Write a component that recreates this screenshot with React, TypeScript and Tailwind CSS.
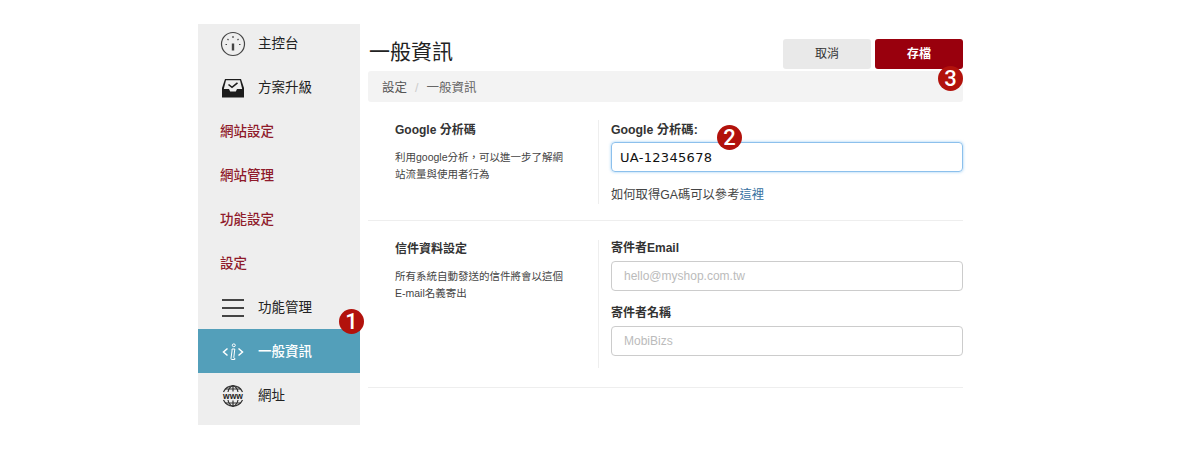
const font = { fontFamily: '"Liberation Sans", "Noto Sans CJK TC", sans-serif' }

function Badge({ n, className }: { n: number; className: string }) {
  return (
    <span
      style={{ fontFamily: 'Roboto, sans-serif' }}
      className={`absolute z-10 flex h-[25px] w-[25px] items-center justify-center rounded-full bg-[#b2120c] text-[22px] font-medium text-white ${className}`}
    >
      {n}
    </span>
  )
}

function GaugeIcon() {
  return (
    <svg width="26" height="26" viewBox="0 0 26 26" fill="none" stroke="#444">
      <circle cx="13" cy="13" r="11.5" strokeWidth="1.2" />
      <path d="M13 12.500v7" strokeWidth="2.400" />
      <path d="M13 5v2M7.500 8l1 1.200M18.500 8l-1 1.200M5.500 13.500h1.500M19 13.500h1.500" strokeWidth="1.200" />
    </svg>
  )
}

function InboxIcon() {
  return (
    <svg width="24" height="20" viewBox="0 0 24 20">
      <path d="M4 1h16l3 9v9.500H1V10z" fill="#1c1c1c" />
      <path d="M5 2.200h14L21.200 11H16l-1.200 2.500H9.200L8 11H2.800z" fill="#eee" />
      <path d="M7.500 6.500l3.500 2.800 5.500-4.500" fill="none" stroke="#1c1c1c" strokeWidth="1.600" />
    </svg>
  )
}

function MenuIcon() {
  return (
    <div className="flex w-[22px] flex-col gap-[6px]">
      <span className="h-[2px] bg-[#444]" />
      <span className="h-[2px] bg-[#444]" />
      <span className="h-[2px] bg-[#444]" />
    </div>
  )
}

function InfoCodeIcon() {
  return (
    <svg width="22" height="18" viewBox="0 0 22 18" fill="none" stroke="#fff">
      <path d="M5.500 5.500L1.500 9l4 3.500M16.500 5.500l4 3.500-4 3.500" strokeWidth="1.500" />
      <ellipse cx="11.800" cy="2.300" rx="1.500" ry="1.400" strokeWidth="1" />
      <path d="M10 6h2.800l-1 8.500q0 1 1.200 1l-.2 1h-3q-1 0-.8-1.200L10 8z" strokeWidth="1" />
    </svg>
  )
}

function WwwIcon() {
  return (
    <svg width="24" height="22" viewBox="0 0 24 22" fill="none" stroke="#333" strokeWidth="1.200">
      <path d="M2.500 7a10.500 10.500 0 0 1 19 0M2.500 15a10.500 10.500 0 0 0 19 0" />
      <path d="M12 .5v6M12 15.500v6M7 7c.6-3 2.500-5.500 5-6.500 2.500 1 4.400 3.500 5 6.500M7 15c.6 3 2.500 5.500 5 6.500 2.500-1 4.400-3.500 5-6.500M4 4h16M4 18h16" />
      <text x="12" y="13.500" textAnchor="middle" fontSize="8.500" fontWeight="700" fill="#222" stroke="none" fontFamily="Liberation Sans">www</text>
    </svg>
  )
}

const navItems = [
  { name: '主控台', icon: <GaugeIcon /> },
  { name: '方案升級', icon: <InboxIcon /> },
  { name: '網站設定', group: true },
  { name: '網站管理', group: true },
  { name: '功能設定', group: true },
  { name: '設定', group: true },
  { name: '功能管理', icon: <MenuIcon /> },
  { name: '一般資訊', icon: <InfoCodeIcon />, active: true },
  { name: '網址', icon: <WwwIcon /> },
]

function Sidebar() {
  return (
    <aside className="relative h-[401px] w-[162px] shrink-0 overflow-hidden bg-[#eeeeee]">
      <ul className="-mt-[3px]">
        {navItems.map((item) => {
          if (item.group) {
            return (
              <li key={item.name} className="flex h-[44px] items-center pl-[22px] pt-[2px] text-[13.500px] font-medium text-[#8f1a2a]">
                {item.name}
              </li>
            )
          }
          return (
            <li
              key={item.name}
              className={`flex h-[44px] items-center pt-[2px] text-[13.500px] ${item.active ? 'bg-[#539fba] font-medium text-white' : 'text-[#222]'}`}
            >
              <span className="flex w-[60px] shrink-0 items-center justify-center pl-[10px]">{item.icon}</span>
              {item.name}
            </li>
          )
        })}
      </ul>
    </aside>
  )
}

function Field({ label, placeholder }: { label: string; placeholder: string }) {
  return (
    <div>
      <label className="block pt-[1px] text-xs font-bold leading-[14px] text-[#333]">{label}</label>
      <input
        readOnly
        placeholder={placeholder}
        className="mt-[6px] block h-[30px] w-full rounded-[4px] border border-[#ccc] bg-white px-[12px] text-xs outline-none placeholder:text-[#bbb]"
      />
    </div>
  )
}

export default function App() {
  return (
    <div style={font} className="flex h-[450px] w-[1200px] overflow-hidden bg-white pl-[198px] pt-[24px]">
      <Sidebar />

      <main className="relative ml-[8px] w-[595px]">
        <div className="flex h-[45px] items-end justify-between">
          <h1 className="mb-[2px] pl-[1px] text-[21px] leading-[30px] text-[#222]">一般資訊</h1>
          <div className="flex gap-[4px]">
            <button className="h-[30px] w-[88px] rounded-[3px] bg-[#e9e9e9] text-xs text-[#333]">取消</button>
            <button className="h-[30px] w-[88px] rounded-[3px] bg-[#99000d] text-xs font-bold text-white">存檔</button>
          </div>
        </div>

        <nav className="mt-[2px] flex h-[31px] items-center gap-[8px] rounded-[3px] bg-[#f3f3f3] pl-[14px] pt-[3px] text-[12.500px] text-[#555]">
          <span>設定</span>
          <span className="text-[#ccc]">/</span>
          <span className="text-[#666]">一般資訊</span>
        </nav>

        {/* Google analytics */}
        <section className="flex h-[119px] border-b border-[#eeeeee] pt-[18px]">
          <div className="w-[230px] pl-[27px] pt-[2px]">
            <h2 className="text-xs font-bold leading-[16px] text-[#333]">Google 分析碼</h2>
            <p className="mt-[11px] w-[172px] text-[10.500px] leading-[17px] text-[#444]">
              利用google分析，可以進一步了解網站流量與使用者行為
            </p>
          </div>
          <div className="h-[84px] flex-1 border-l border-[#eeeeee] pl-[12px] pt-[3px]">
            <label className="block text-[12.300px] font-bold leading-[14px] text-[#333]">Google 分析碼:</label>
            <input
              readOnly
              value="UA-12345678"
              className="mt-[5px] block h-[30px] w-full rounded-[4px] border border-[#8cc0ec] px-[8px] text-[13px] tracking-[0.3px] text-[#111] shadow-[0_0_3px_rgba(82,168,236,0.6)] outline-none"
              style={{ fontFamily: '"DejaVu Sans", sans-serif' }}
            />
            <p className="mt-[15px] text-[12.300px] leading-[16px] text-[#444]">
              如何取得GA碼可以參考<a className="text-[#33709f]">這裡</a>
            </p>
          </div>
        </section>

        {/* Mail settings */}
        <section className="flex h-[167px] border-b border-[#eeeeee] pt-[19px]">
          <div className="w-[230px] pl-[27px] pt-[1px]">
            <h2 className="text-xs font-bold leading-[16px] text-[#333]">信件資料設定</h2>
            <p className="mt-[11px] w-[172px] text-[10.500px] leading-[17px] text-[#444]">
              所有系統自動發送的信件將會以這個E-mail名義寄出
            </p>
          </div>
          <div className="flex h-[128px] flex-1 flex-col gap-[14px] border-l border-[#eeeeee] pl-[12px]">
            <Field label="寄件者Email" placeholder="hello@myshop.com.tw" />
            <Field label="寄件者名稱" placeholder="MobiBizs" />
          </div>
        </section>

        <Badge n={3} className="left-[570px] top-[42px]" />
        <Badge n={2} className="left-[349px] top-[101px]" />
      </main>

      <Badge n={1} className="left-[339px] top-[309px]" />
    </div>
  )
}
